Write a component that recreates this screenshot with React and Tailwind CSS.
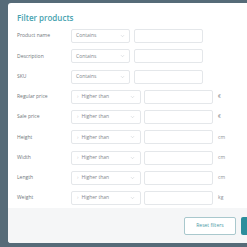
import React from "react";

const textRows = ["Product name", "Description", "SKU"];
const numRows = [
  ["Regular price", "€"],
  ["Sale price", "€"],
  ["Height", "cm"],
  ["Width", "cm"],
  ["Length", "cm"],
  ["Weight", "kg"],
];

function Chevron() {
  return (
    <svg width="5" height="4" viewBox="0 0 5 4" className="shrink-0">
      <path d="M1 1.2 L2.5 2.7 L4 1.2" fill="none" stroke="#c9ced2" strokeWidth="0.6" />
    </svg>
  );
}

export default function App() {
  return (
    <div
      className="w-[247px] h-[247px] overflow-hidden bg-[#566b78] pl-[8px] pt-[3px]"
      style={{ fontFamily: '"Open Sans", "Noto Sans", sans-serif' }}
    >
      <div className="w-[280px] h-[240px] bg-white rounded-[3px] flex flex-col overflow-hidden">
        <div className="pl-[9px] pt-[10px] text-[8px] leading-[10px] font-semibold text-[#46a2af]">
          Filter products
        </div>
        <div className="pl-[9px] mt-[6px] flex flex-col gap-[6.25px]">
          {textRows.map((l) => (
            <div key={l} className="flex items-center h-[14px]">
              <div className="w-[54px] text-[5px] text-[#70767a]">{l}</div>
              <div className="w-[59px] h-[14px] border border-[#e4e7ea] rounded-[2px] flex items-center justify-between pl-[4px] pr-[4px]">
                <span className="text-[5px] text-[#80868b]">Contains</span>
                <Chevron />
              </div>
              <div className="ml-[4px] w-[69px] h-[14px] border border-[#e4e7ea] rounded-[2px]" />
            </div>
          ))}
          {numRows.map(([l, u]) => (
            <div key={l} className="flex items-center h-[14px]">
              <div className="w-[54px] text-[5px] text-[#70767a]">{l}</div>
              <div className="w-[70px] h-[14px] border border-[#e4e7ea] rounded-[2px] flex items-center justify-between pl-[5px] pr-[5px]">
                <span className="text-[5px] text-[#80868b] flex items-center">
                  <span className="text-[#c2c7cb] mr-[3px]">›</span>Higher than
                </span>
                <Chevron />
              </div>
              <div className="ml-[3px] w-[69px] h-[14px] border border-[#e4e7ea] rounded-[2px]" />
              <div className="ml-[5px] text-[5px] text-[#8a9095]">{u}</div>
            </div>
          ))}
        </div>
        <div className="mt-[3px] flex-1 bg-[#f5f6f7] flex items-center pl-[176px] gap-[5px]">
          <div className="w-[55px] h-[18px] border border-[#a9c8cd] rounded-[2px] bg-white flex items-center justify-center text-[5px] text-[#4b9aa6]">
            Reset filters
          </div>
          <div className="w-[50px] h-[18px] rounded-[2px] bg-[#2b8e9c]" />
        </div>
      </div>
    </div>
  );
}
